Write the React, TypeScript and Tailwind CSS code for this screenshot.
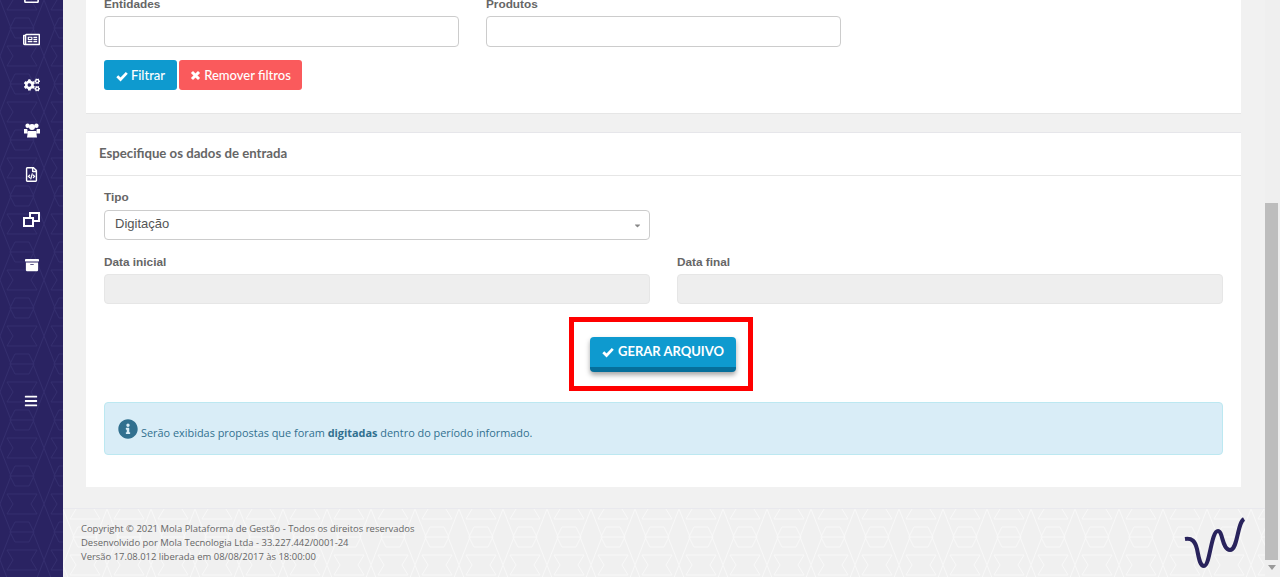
import { ComponentType, ReactNode } from "react";
import { FaArchive, FaBars, FaCaretDown, FaCogs, FaInfoCircle, FaRegCalendar, FaRegFileCode, FaRegNewspaper } from "react-icons/fa";

function HexPattern({ id, color }: { id: string; color: string }) {
  return (
    <svg className="absolute inset-0 h-full w-full" aria-hidden="true">
      <defs>
        <pattern id={id} width="44" height="56" patternUnits="userSpaceOnUse">
          <path
            d="M0 0l11 28L0 56M44 0L33 28l11 28M11 28h22M7 10l6-10M37 10L31 0M7 46l6 10M37 46l-6 10M7 10h30M7 46h30M15 18h14l5 10-5 10H15l-5-10z"
            fill="none"
            stroke={color}
            strokeWidth="1"
          />
        </pattern>
      </defs>
      <rect width="100%" height="100%" fill={`url(#${id})`} />
    </svg>
  );
}

function Label({ children, className }: { children: ReactNode; className: string }) {
  return <label className={`block text-[11.8px] leading-[17px] font-bold text-[#666] font-['Liberation_Sans',sans-serif] ${className}`}>{children}</label>;
}

function CheckIcon({ size }: { size: number }) {
  return (
    <svg width={size} height={size} viewBox="0 0 14 14" fill="none" stroke="currentColor" strokeWidth="3.2">
      <path d="M1.5 7.2l3.8 3.8L12.6 3.4" />
    </svg>
  );
}

function TimesIcon({ size }: { size: number }) {
  return (
    <svg width={size} height={size} viewBox="0 0 14 14" fill="none" stroke="currentColor" strokeWidth="3.8">
      <path d="M2.5 2.5l9 9M11.5 2.5l-9 9" />
    </svg>
  );
}

function RestoreIcon({ size }: { size: number }) {
  return (
    <svg width={size} height={size} viewBox="0 0 17 15" fill="none" stroke="currentColor" strokeWidth="2">
      <rect x="7" y="1" width="9" height="8" />
      <rect x="1" y="6" width="9" height="8" fill="#2a2362" />
    </svg>
  );
}

function UsersIcon({ size }: { size: number }) {
  return (
    <svg width={size} height={size} viewBox="0 0 16 15" fill="currentColor">
      <circle cx="3.6" cy="3.2" r="2.2" />
      <circle cx="12.4" cy="3.2" r="2.2" />
      <path d="M0 6.5h3.2L4 11H0zM16 6.5h-3.2L12 11h4z" />
      <circle cx="8" cy="4.6" r="3" />
      <path d="M4 8.5h8l1 6.5H3z" />
    </svg>
  );
}

function CalendarStub({ size }: { size: number }) {
  return <FaRegCalendar size={size} />;
}

const sideIcons: { Icon: ComponentType<{ size: number }>; size: number }[] = [
  { Icon: CalendarStub, size: 17 },
  { Icon: FaRegNewspaper, size: 17 },
  { Icon: FaCogs, size: 16 },
  { Icon: UsersIcon, size: 16 },
  { Icon: FaRegFileCode, size: 15 },
  { Icon: RestoreIcon, size: 17 },
  { Icon: FaArchive, size: 14 },
];

export default function App() {
  return (
    <div className="flex h-[577px] w-[1280px] overflow-hidden bg-[#f1f1f1] font-['Lato',sans-serif]">
      <aside className="relative flex w-[63px] shrink-0 flex-col items-center overflow-hidden bg-[#2a2362] text-white">
        <HexPattern id="side-hex" color="#342e6e" />
        <div className="relative -mt-[28px] flex flex-col items-center">
          {sideIcons.map(({ Icon, size }, index) => (
            <div key={index} className="flex h-[45px] w-[63px] items-center justify-center">
              <Icon size={size} />
            </div>
          ))}
        </div>
        <div className="relative mt-[107px] -ml-[1px]">
          <FaBars size={14} />
        </div>
      </aside>

      <main className="flex min-w-0 flex-1 flex-col">
        <div className="flex-1 overflow-hidden pr-[24px] pl-[23px]">
          <section className="-mt-[20px] h-[134px] border-b border-[#e6e6e6] bg-white px-[18px]">
            <div className="flex gap-[27px] pt-[16px]">
              <div className="w-[355px]">
                <Label className="mb-[3px]">Entidades</Label>
                <input className="block h-[31px] w-full rounded-[4px] border border-[#ccc] bg-white" />
              </div>
              <div className="w-[355px]">
                <Label className="mb-[3px]">Produtos</Label>
                <input className="block h-[31px] w-full rounded-[4px] border border-[#ccc] bg-white" />
              </div>
            </div>
            <div className="mt-[13px] flex gap-[2px] text-[13px] font-medium text-white">
              <button className="flex h-[30px] w-[73px] items-center justify-center gap-[3px] rounded-[3px] bg-[#0e9acf] pt-[1px]">
                <CheckIcon size={12} />
                Filtrar
              </button>
              <button className="flex h-[30px] w-[123px] items-center justify-center gap-[3px] rounded-[3px] bg-[#fa5a5c] pt-[1px]">
                <TimesIcon size={11} />
                Remover filtros
              </button>
            </div>
          </section>

          <section className="mt-[18px] h-[355px] border-t border-[#e6e6ea] bg-white">
            <h3 className="flex h-[43px] items-center border-b border-[#e6e6e6] px-[13px] text-[13.2px] font-bold text-[#666]">
              Especifique os dados de entrada
            </h3>
            <div className="px-[18px] pt-[13px]">
              <div className="w-[546px]">
                <Label className="mb-[4px]">Tipo</Label>
                <div className="flex h-[30px] items-center justify-between rounded-[4px] border border-[#ccc] bg-white pr-[7px] pl-[10px] text-[13px] text-[#555] font-['Liberation_Sans',sans-serif]">
                  <span className="-mt-[2px]">Digitação</span>
                  <FaCaretDown size={9} className="text-[#888]" />
                </div>
              </div>
              <div className="mt-[14px] grid grid-cols-2 gap-[27px]">
                <div>
                  <Label className="mb-[3px]">Data inicial</Label>
                  <input disabled className="block h-[30px] w-full rounded-[4px] border border-[#e6e6e6] bg-[#eeeeee]" />
                </div>
                <div>
                  <Label className="mb-[3px]">Data final</Label>
                  <input disabled className="block h-[30px] w-full rounded-[4px] border border-[#e6e6e6] bg-[#eeeeee]" />
                </div>
              </div>
              <div className="mt-[13px] flex justify-center pr-[5px]">
                <div className="border-[5px] border-[#ff0000] pt-[15px] pr-[12px] pb-[14px] pl-[16px]">
                  <button className="flex h-[35px] w-[146px] items-center justify-center gap-[4px] rounded-[4px] border-b-[5px] border-[#066f9b] bg-[#0e9acf] pb-[1px] text-[13px] font-bold text-white shadow-[0_3px_5px_rgba(0,0,0,0.35)]">
                    <CheckIcon size={12} />
                    GERAR ARQUIVO
                  </button>
                </div>
              </div>
              <div className="mt-[11px] flex h-[53px] items-center rounded-[4px] border border-[#bce8f1] bg-[#d9edf7] pl-[13px] text-[10.9px] text-[#31708f] font-['Open_Sans',sans-serif]">
                <FaInfoCircle size={20} className="mr-[3px] shrink-0" />
                <span className="mt-[9px]">
                  Serão exibidas propostas que foram <b>digitadas</b> dentro do período informado.
                </span>
              </div>
            </div>
          </section>
        </div>

        <footer className="relative flex h-[69px] shrink-0 justify-between overflow-hidden border-t border-[#e9e9ee] bg-[#f0f0f0] pt-[13px] pr-[19px] pl-[18px]">
          <HexPattern id="foot-hex" color="#f8f8f8" />
          <div className="relative text-[9.45px] leading-[14px] text-[#666] font-['Open_Sans',sans-serif]">
            <p>Copyright © 2021 Mola Plataforma de Gestão - Todos os direitos reservados</p>
            <p>Desenvolvido por Mola Tecnologia Ltda - 33.227.442/0001-24</p>
            <p>Versão 17.08.012 liberada em 08/08/2017 às 18:00:00</p>
          </div>
          <svg className="relative -mt-[5px] shrink-0" width="62" height="54" viewBox="0 0 62 54" fill="none">
            <path
              d="M1 22C8 21 11 24 13 32C15 42 16 49 20 49C26 49 27 14 34 14C39 14 38 33 46 33C54 33 53 6 60 2"
              stroke="#29235c"
              strokeWidth="4"
            />
          </svg>
        </footer>
      </main>

      <div className="flex w-[15px] shrink-0 flex-col bg-[#efefef]">
        <div className="mt-[203px] h-[357px] w-[13px] bg-[#bdbdbd]" />
        <div className="mt-[5px] ml-[3px] h-0 w-0 border-x-[4px] border-t-[5px] border-x-transparent border-t-[#999]" />
      </div>
    </div>
  );
}
